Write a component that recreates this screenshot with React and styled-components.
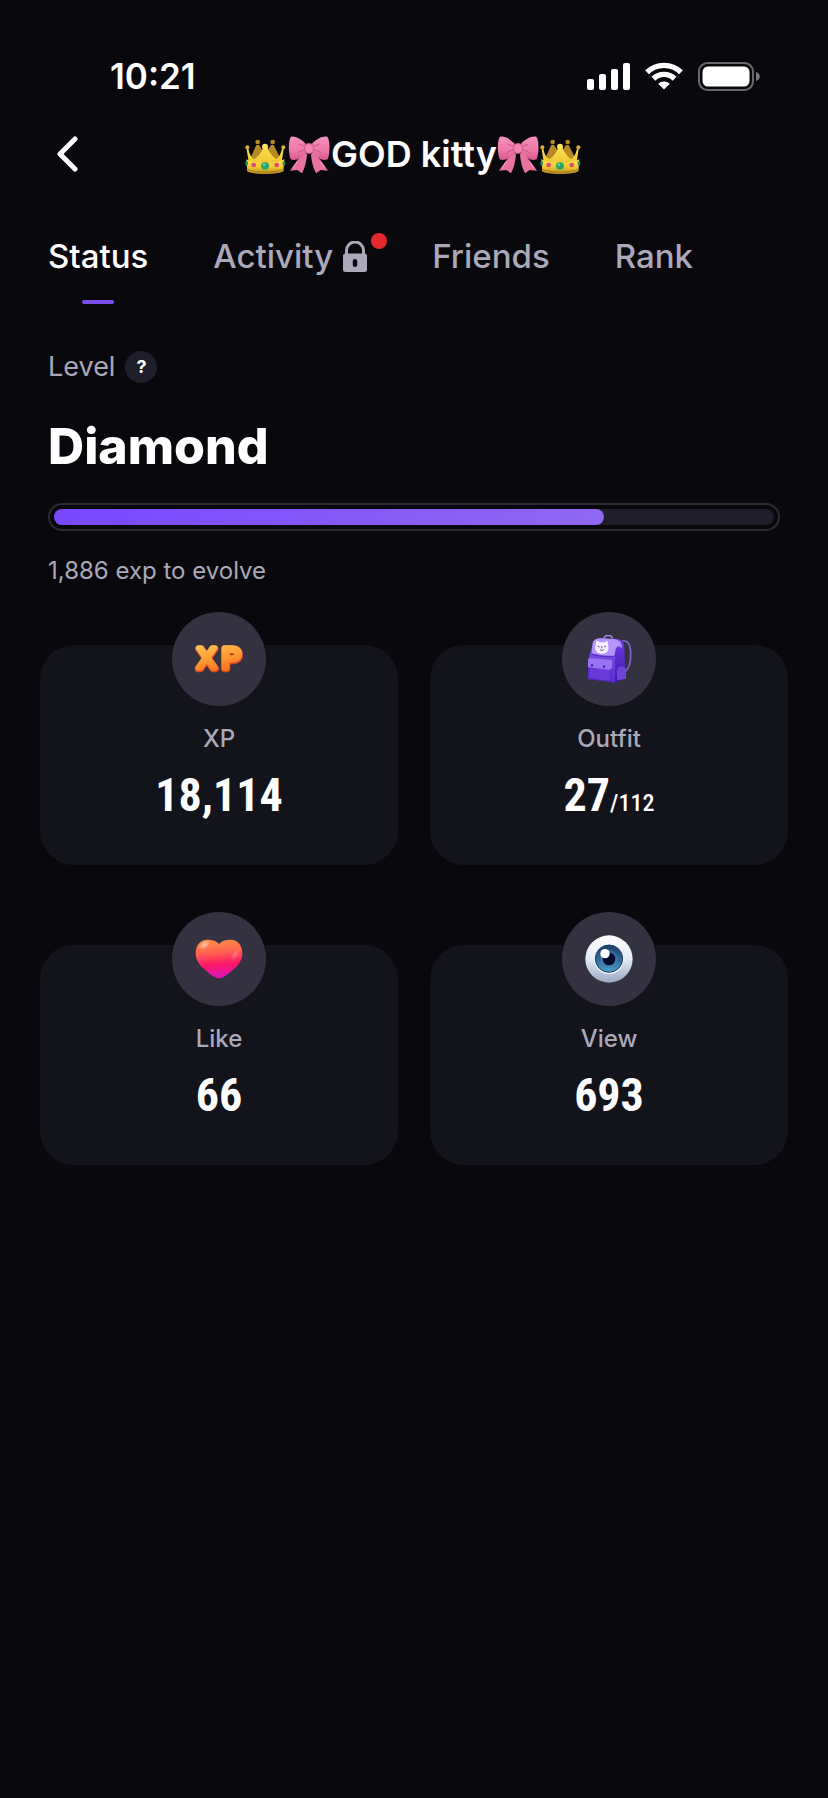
import React, { useState } from "react";
import styled, { createGlobalStyle } from "styled-components";

const GlobalStyle = createGlobalStyle`
  * {
    box-sizing: border-box;
  }
  body {
    margin: 0;
    background-color: #09090d;
    color: #ffffff;
    font-family: Inter, "Liberation Sans", sans-serif;
  }
  button {
    padding: 0;
    border: 0;
    background: none;
    color: inherit;
    font: inherit;
    cursor: pointer;
  }
  svg {
    display: block;
    flex: none;
  }
`;

const Page = styled.div`
  min-height: 100vh;
  padding-top: 54px;
`;

const StatusBar = styled.div`
  display: flex;
  align-items: center;
  justify-content: space-between;
  padding: 0 68px 0 110px;
`;

const Time = styled.time`
  font-size: 35px;
  font-weight: 600;
  line-height: 44px;
`;

const StatusIcons = styled.div`
  display: flex;
  align-items: center;
  gap: 15px;
`;

const Header = styled.header`
  display: grid;
  grid-template-columns: 64px 1fr 64px;
  align-items: center;
  margin-top: 24px;
  padding: 0 35px;
`;

const BackButton = styled.button`
  display: flex;
  align-items: center;
  justify-content: center;
  height: 64px;
`;

const Title = styled.h1`
  display: flex;
  align-items: center;
  justify-content: center;
  margin: 0;
  font-size: 36px;
  font-weight: 600;
  line-height: 44px;
  white-space: nowrap;
`;

const Tabs = styled.div`
  display: flex;
  gap: 65px;
  margin-top: 46px;
  padding: 0 48px;
`;

const Tab = styled.button`
  display: flex;
  flex-direction: column;
  align-items: center;
  gap: 20px;
  color: ${(props) => (props.$active ? "#ffffff" : "#aaa8b9")};
  font-size: 33px;
  font-weight: 500;
  line-height: 48px;

  &::after {
    content: "";
    width: 32px;
    height: 4px;
    border-radius: 2px;
    background-color: ${(props) => (props.$active ? "#7c4dea" : "transparent")};
  }
`;

const TabLabel = styled.span`
  position: relative;
  display: flex;
  align-items: center;
  gap: 10px;
`;

const Dot = styled.span`
  position: absolute;
  top: 1px;
  right: -20px;
  width: 16px;
  height: 16px;
  border-radius: 50%;
  background-color: #e4282e;
`;

const Level = styled.section`
  margin-top: 43px;
  padding: 0 48px;
`;

const LevelRow = styled.div`
  display: flex;
  align-items: center;
  gap: 10px;
  color: #aaa8b9;
  font-size: 27px;
  line-height: 40px;
`;

const HelpButton = styled.button`
  width: 32px;
  height: 32px;
  border-radius: 50%;
  background-color: #1f1f2b;
  color: #ffffff;
  font-size: 18px;
  font-weight: 700;
  line-height: 32px;
  text-align: center;
`;

const LevelName = styled.h2`
  margin: 29px 0 0;
  font-size: 50px;
  font-weight: 800;
  line-height: 60px;
`;

const Progress = styled.div`
  margin-top: 27px;
  padding: 4px;
  border: 2px solid #2b2a33;
  border-radius: 14px;
`;

const Track = styled.div`
  height: 16px;
  border-radius: 8px;
  background-color: #1f1e2a;
`;

const Fill = styled.div`
  height: 100%;
  border-radius: 8px;
  background: linear-gradient(90deg, #7a47ff, #9068f3);
`;

const Hint = styled.p`
  margin: 22px 0 0;
  color: #aaa8b9;
  font-size: 24px;
  line-height: 36px;
`;

const Cards = styled.main`
  display: grid;
  grid-template-columns: 1fr 1fr;
  gap: 80px 32px;
  margin-top: 56px;
  padding: 0 40px 40px;
`;

const Card = styled.section`
  position: relative;
  padding: 78px 16px 46px;
  border-radius: 34px;
  background-color: #13131b;
  text-align: center;
`;

const Badge = styled.div`
  position: absolute;
  top: -33px;
  left: calc(50% - 47px);
  display: flex;
  align-items: center;
  justify-content: center;
  width: 94px;
  height: 94px;
  border-radius: 50%;
  background-color: #343241;
`;

const CardLabel = styled.h3`
  margin: 0;
  color: #aaa8b9;
  font-size: 24px;
  font-weight: 500;
  line-height: 32px;
`;

const CardValue = styled.p`
  margin: 16px 0 0;
  font-family: "Roboto Condensed", Roboto, sans-serif;
  font-size: 46px;
  font-weight: 700;
  line-height: 48px;
`;

const Total = styled.span`
  font-size: 24px;
  font-weight: 500;
  line-height: 24px;
`;

const Signal = () => (
  <svg width="43" height="27" viewBox="0 0 43 27" fill="#fff" aria-hidden="true">
    <rect x="0" y="16" width="7" height="11" rx="2" />
    <rect x="12" y="11" width="7" height="16" rx="2" />
    <rect x="24" y="6" width="7" height="21" rx="2" />
    <rect x="36" y="0" width="7" height="27" rx="2" />
  </svg>
);

const Wifi = () => (
  <svg width="38" height="28" viewBox="0 0 38 28" aria-hidden="true">
    <g fill="none" stroke="#fff" strokeWidth="5.4">
      <path d="M2 10.2a24.5 24.5 0 0 1 34 0" />
      <path d="M8.4 16.7a15.2 15.2 0 0 1 21.2 0" />
    </g>
    <path d="M19 27.5l-5.8-5.8a8.4 8.4 0 0 1 11.6 0z" fill="#fff" />
  </svg>
);

const Battery = () => (
  <svg width="62" height="29" viewBox="0 0 62 29" aria-hidden="true">
    <rect x="1" y="1" width="54" height="27" rx="8.5" fill="none" stroke="#68686c" strokeWidth="2" />
    <rect x="4.5" y="4.5" width="47" height="20" rx="5.5" fill="#fff" />
    <path d="M58 10c5 1.5 5 7.5 0 9z" fill="#7b7b7f" />
  </svg>
);

const Chevron = () => (
  <svg width="22" height="36" viewBox="0 0 22 36" fill="none" aria-hidden="true">
    <path d="M19 3L4 18l15 15" stroke="#fff" strokeWidth="5" strokeLinecap="round" strokeLinejoin="round" />
  </svg>
);

const Lock = () => (
  <svg width="24" height="31" viewBox="0 0 24 31" aria-hidden="true">
    <path d="M3.5 14v-4.500a8.5 8.5 0 0 1 17 0V14" fill="none" stroke="#aaa8b9" strokeWidth="3" />
    <rect y="12.5" width="24" height="18.5" rx="2.5" fill="#aaa8b9" />
    <rect x="9.8" y="18" width="4.4" height="8" rx="2.2" fill="#09090d" />
  </svg>
);

const Crown = ({ id }) => (
  <svg width="43" height="43" viewBox="0 0 129 129" role="img" aria-label="crown">
    <defs>
      <linearGradient id={id} x1="0" y1="0" x2="0" y2="1">
        <stop offset="0" stopColor="#fbe04c" />
        <stop offset="0.55" stopColor="#f1c833" />
        <stop offset="1" stopColor="#b58a1d" />
      </linearGradient>
    </defs>
    <g fill="#b58a26">
      <path d="M12 84L34 36h8l18 28 18-28h8l24 48z" />
      <circle cx="38" cy="27" r="7" />
      <circle cx="83" cy="27" r="7" />
    </g>
    <path
      d="M5 49l7 44-7 20c14 13 96 13 111 0l-7-20 7-44-5-2c-4 17-10 29-18 31-12-8-20-20-27-35h-10C49 58 41 70 29 78 19 76 13 62 10 47z"
      fill={`url(#${id})`}
    />
    <path d="M4 79c30 15 84 15 114 0l-3 35c-16 11-92 11-108 0z" fill={`url(#${id})`} />
    <path d="M6 109c24 11 86 11 110 0" fill="none" stroke="#a27c1c" strokeWidth="3" />
    <circle cx="60" cy="41" r="9" fill="#fae45a" />
    <circle cx="7" cy="43" r="6" fill="#dcb13b" />
    <circle cx="115" cy="43" r="6" fill="#dcb13b" />
    <ellipse cx="60" cy="99" rx="12" ry="11" fill="#2aa568" />
    <circle cx="57" cy="95" r="4" fill="#62d096" />
    <circle cx="26" cy="96" r="7" fill="#d84a77" />
    <circle cx="95" cy="96" r="7" fill="#d84a77" />
    <ellipse cx="5" cy="91" rx="4" ry="8" fill="#218f5d" />
    <ellipse cx="117" cy="91" rx="4" ry="8" fill="#218f5d" />
  </svg>
);

const Bow = ({ id }) => (
  <svg width="43" height="43" viewBox="0 0 129 129" role="img" aria-label="bow">
    <defs>
      <linearGradient id={id} x1="0" y1="0" x2="0" y2="1">
        <stop offset="0" stopColor="#f391bc" />
        <stop offset="0.6" stopColor="#ee77aa" />
        <stop offset="1" stopColor="#d9588e" />
      </linearGradient>
    </defs>
    <path d="M50 58C36 72 20 92 6 113l22-2 14 10c9-18 14-38 15-58z" fill="#e8739f" />
    <path d="M76 58c14 14 30 34 44 55l-22-2-14 10c-9-18-14-38-15-58z" fill="#e8739f" />
    <path d="M52 31C38 18 24 9 9 11 0 22 1 60 8 79c15 6 32-3 46-22z" fill={`url(#${id})`} />
    <path d="M73 31C87 18 101 9 118 11c9 11 8 49 1 68-15 6-32-3-46-22z" fill={`url(#${id})`} />
    <path d="M50 40L34 34M49 50l-19 8M77 40l16-6M78 50l19 8" stroke="#cf5788" strokeWidth="3" strokeLinecap="round" />
    <path d="M27 86L17 104M98 86l11 18" stroke="#f59bc0" strokeWidth="3" strokeLinecap="round" />
    <rect x="50" y="32" width="26" height="29" rx="10" fill="#f285b3" stroke="#cf5a8a" strokeWidth="3" />
  </svg>
);

const XpIcon = () => (
  <svg width="48" height="48" viewBox="0 0 144 144" aria-hidden="true">
    <defs>
      <linearGradient id="xp" gradientUnits="userSpaceOnUse" x1="20" y1="30" x2="36" y2="112">
        <stop offset="0" stopColor="#ffc057" />
        <stop offset="0.5" stopColor="#ff9f36" />
        <stop offset="1" stopColor="#fb7524" />
      </linearGradient>
    </defs>
    <g
      fontFamily="Liberation Sans, sans-serif"
      fontSize="86"
      strokeLinecap="round"
      strokeLinejoin="round"
      textAnchor="middle"
    >
      <text y="103" fill="#d94a12" stroke="#d94a12" strokeWidth="19">
        <tspan x="35">X</tspan>
        <tspan x="109">P</tspan>
      </text>
      <text y="100" fill="url(#xp)" stroke="url(#xp)" strokeWidth="16">
        <tspan x="35">X</tspan>
        <tspan x="109">P</tspan>
      </text>
    </g>
  </svg>
);

const BackpackIcon = () => (
  <svg width="48" height="48" viewBox="0 0 144 144" aria-hidden="true">
    <defs>
      <linearGradient id="bagFront" x1="0" y1="0" x2="0" y2="1">
        <stop offset="0" stopColor="#8c5cf0" />
        <stop offset="1" stopColor="#5a2bd0" />
      </linearGradient>
      <linearGradient id="bagSide" x1="0" y1="0" x2="0" y2="1">
        <stop offset="0" stopColor="#6d3be0" />
        <stop offset="1" stopColor="#4317ae" />
      </linearGradient>
    </defs>
    <path d="M112 18c17-2 24 10 25 36s-2 46-19 58" fill="none" stroke="#7d63c4" strokeWidth="5" />
    <path d="M57 12c0-14 24-14 25-1" fill="none" stroke="#9c86d8" strokeWidth="5" />
    <path d="M80 12c24-3 36 3 38 22l3 96-33 13z" fill="url(#bagSide)" />
    <path d="M96 136V108c1-16 22-20 27-5v28z" fill="#6e43d8" />
    <path d="M23 27C26 13 36 9 54 10l36 4v129L9 132l1-58z" fill="url(#bagFront)" />
    <path d="M23 24c3-11 14-14 28-14l40 3c16 3 20 13 20 28-7-10-14-7-19 0-2 12-2 20-7 21-24 1-43-1-65-7z" fill="#b493fa" />
    <path d="M20 58c22 6 42 8 65 7" fill="none" stroke="#5728bd" strokeWidth="3" />
    <path d="M35 16l9 6h14l10-4 2 15c3 14-6 24-20 23-13 0-22-10-19-23z" fill="#f5efff" />
    <path d="M38 33l6 3M63 33l-6 3M45 43c4 5 9 5 12 0M50 33v7" fill="none" stroke="#6f5797" strokeWidth="3" />
    <path d="M11 99v29c22 6 42 9 67 10v-37z" fill="#6b38dc" stroke="#4c20b7" strokeWidth="2" />
    <path d="M14 70c22 1 43 4 67 5v22c-1 5-4 7-8 7-21-1-42-4-64-8V76c0-4 2-6 5-6z" fill="#9a73f2" />
    <circle cx="21" cy="91" r="4" fill="#5425bd" />
    <circle cx="57" cy="95" r="4" fill="#5425bd" />
  </svg>
);

const HeartIcon = () => (
  <svg width="48" height="48" viewBox="0 0 144 144" aria-hidden="true">
    <defs>
      <linearGradient id="heart" x1="0" y1="0" x2="0.1" y2="1">
        <stop offset="0" stopColor="#ff9145" />
        <stop offset="0.35" stopColor="#ff664d" />
        <stop offset="0.68" stopColor="#ff1767" />
        <stop offset="1" stopColor="#db16b4" />
      </linearGradient>
      <radialGradient id="heartShine">
        <stop offset="0" stopColor="#fff" stopOpacity="0.6" />
        <stop offset="1" stopColor="#fff" stopOpacity="0" />
      </radialGradient>
    </defs>
    <path
      d="M72 27C62 16 49 14 37 14 16 14 2 31 2 54c0 20 11 36 26 49 11 10 21 18 31 23 8 5 18 5 26 0 10-5 20-13 31-23 15-13 26-29 26-49 0-23-14-40-35-40-12 0-25 2-35 13z"
      fill="url(#heart)"
    />
    <ellipse cx="28" cy="30" rx="19" ry="12" fill="url(#heartShine)" transform="rotate(-32 28 30)" />
    <ellipse cx="120" cy="60" rx="10" ry="20" fill="url(#heartShine)" opacity="0.4" transform="rotate(30 120 60)" />
  </svg>
);

const EyeIcon = () => (
  <svg width="48" height="48" viewBox="0 0 144 144" aria-hidden="true">
    <defs>
      <linearGradient id="eyeball" x1="0" y1="0" x2="0" y2="1">
        <stop offset="0" stopColor="#ffffff" />
        <stop offset="0.5" stopColor="#e3ebf4" />
        <stop offset="1" stopColor="#98a8c4" />
      </linearGradient>
      <linearGradient id="iris" x1="0" y1="0" x2="0" y2="1">
        <stop offset="0" stopColor="#203d68" />
        <stop offset="0.6" stopColor="#326f9f" />
        <stop offset="1" stopColor="#4ea5cb" />
      </linearGradient>
    </defs>
    <circle cx="72" cy="72" r="71" fill="url(#eyeball)" />
    <circle cx="72" cy="73" r="44" fill="#f5f9fd" />
    <circle cx="72" cy="71" r="41" fill="url(#iris)" stroke="#173a67" strokeWidth="3" />
    <circle cx="72" cy="72" r="27" fill="#3f83b1" opacity="0.5" />
    <circle cx="72" cy="72" r="19" fill="#060b2d" />
    <circle cx="60" cy="56" r="14" fill="#fff" />
  </svg>
);

const tabs = [
  { name: "Status" },
  { name: "Activity", locked: true },
  { name: "Friends" },
  { name: "Rank" },
];

const stats = [
  { label: "XP", value: "18,114", icon: <XpIcon /> },
  { label: "Outfit", value: "27", total: "112", icon: <BackpackIcon /> },
  { label: "Like", value: "66", icon: <HeartIcon /> },
  { label: "View", value: "693", icon: <EyeIcon /> },
];

const percent = 76.4;

const App = () => {
  const [active, setActive] = useState("Status");

  return (
    <Page>
      <GlobalStyle />
      <StatusBar>
        <Time>10:21</Time>
        <StatusIcons>
          <Signal />
          <Wifi />
          <Battery />
        </StatusIcons>
      </StatusBar>
      <Header>
        <BackButton aria-label="Back">
          <Chevron />
        </BackButton>
        <Title>
          <Crown id="crownLeft" />
          <Bow id="bowLeft" />
          GOD kitty
          <Bow id="bowRight" />
          <Crown id="crownRight" />
        </Title>
      </Header>
      <Tabs role="tablist">
        {tabs.map((tab) => (
          <Tab
            key={tab.name}
            role="tab"
            aria-selected={active === tab.name}
            $active={active === tab.name}
            onClick={() => setActive(tab.name)}
          >
            <TabLabel>
              {tab.name}
              {tab.locked && <Lock />}
              {tab.locked && <Dot />}
            </TabLabel>
          </Tab>
        ))}
      </Tabs>
      <Level>
        <LevelRow>
          Level
          <HelpButton aria-label="About levels">?</HelpButton>
        </LevelRow>
        <LevelName>Diamond</LevelName>
        <Progress role="progressbar" aria-label="Level progress" aria-valuenow={percent}>
          <Track>
            <Fill style={{ width: `${percent}%` }} />
          </Track>
        </Progress>
        <Hint>1,886 exp to evolve</Hint>
      </Level>
      <Cards>
        {stats.map((stat) => (
          <Card key={stat.label}>
            <Badge>{stat.icon}</Badge>
            <CardLabel>{stat.label}</CardLabel>
            <CardValue>
              {stat.value}
              {stat.total && <Total>/{stat.total}</Total>}
            </CardValue>
          </Card>
        ))}
      </Cards>
    </Page>
  );
};

export default App;
